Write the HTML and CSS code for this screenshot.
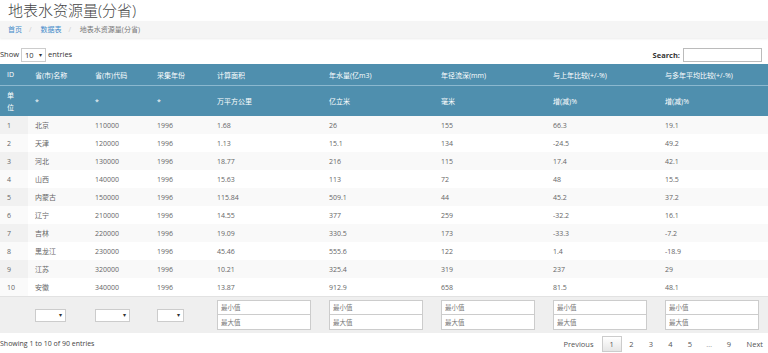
FILE: index.html
```html
<!DOCTYPE html>
<html lang="zh-CN">
<head>
    <meta charset="UTF-8">
    <title>地表水资源量(分省)</title>
    <link rel="stylesheet" href="styles.css">
</head>
<body>
    <h1 class="page-title">地表水资源量(分省)</h1>
    <div class="breadcrumb">
        <a href="#">首页</a><span class="sep">/</span>
        <a href="#">数据表</a><span class="sep">/</span>
        <span class="current">地表水资源量(分省)</span>
    </div>

    <div class="dt-top">
        <div class="dt-length">
            Show <span class="fake-select len">10<i>▾</i></span> entries
        </div>
        <div class="dt-search">
            <b>Search:</b> <input type="text" class="search-input">
        </div>
    </div>

    <table class="data-table">
        <colgroup>
            <col style="width:28px">
            <col style="width:60px">
            <col style="width:62px">
            <col style="width:60px">
            <col style="width:112px">
            <col style="width:112px">
            <col style="width:112px">
            <col style="width:112px">
            <col>
        </colgroup>
        <thead>
            <tr class="head-main">
                <th>ID</th>
                <th>省(市)名称</th>
                <th>省(市)代码</th>
                <th>采集年份</th>
                <th>计算面积</th>
                <th>年水量(亿m3)</th>
                <th>年径流深(mm)</th>
                <th>与上年比较(+/-%)</th>
                <th>与多年平均比较(+/-%)</th>
            </tr>
            <tr class="head-unit">
                <th class="unit-cell">单位</th>
                <th>*</th>
                <th>*</th>
                <th>*</th>
                <th>万平方公里</th>
                <th>亿立米</th>
                <th>毫米</th>
                <th>增(减)%</th>
                <th>增(减)%</th>
            </tr>
        </thead>
        <tbody>
            <tr><td>1</td><td>北京</td><td>110000</td><td>1996</td><td>1.68</td><td>26</td><td>155</td><td>66.3</td><td>19.1</td></tr>
            <tr><td>2</td><td>天津</td><td>120000</td><td>1996</td><td>1.13</td><td>15.1</td><td>134</td><td>-24.5</td><td>49.2</td></tr>
            <tr><td>3</td><td>河北</td><td>130000</td><td>1996</td><td>18.77</td><td>216</td><td>115</td><td>17.4</td><td>42.1</td></tr>
            <tr><td>4</td><td>山西</td><td>140000</td><td>1996</td><td>15.63</td><td>113</td><td>72</td><td>48</td><td>15.5</td></tr>
            <tr><td>5</td><td>内蒙古</td><td>150000</td><td>1996</td><td>115.84</td><td>509.1</td><td>44</td><td>45.2</td><td>37.2</td></tr>
            <tr><td>6</td><td>辽宁</td><td>210000</td><td>1996</td><td>14.55</td><td>377</td><td>259</td><td>-32.2</td><td>16.1</td></tr>
            <tr><td>7</td><td>吉林</td><td>220000</td><td>1996</td><td>19.09</td><td>330.5</td><td>173</td><td>-33.3</td><td>-7.2</td></tr>
            <tr><td>8</td><td>黑龙江</td><td>230000</td><td>1996</td><td>45.46</td><td>555.6</td><td>122</td><td>1.4</td><td>-18.9</td></tr>
            <tr><td>9</td><td>江苏</td><td>320000</td><td>1996</td><td>10.21</td><td>325.4</td><td>319</td><td>237</td><td>29</td></tr>
            <tr><td>10</td><td>安徽</td><td>340000</td><td>1996</td><td>13.87</td><td>912.9</td><td>658</td><td>81.5</td><td>48.1</td></tr>
        </tbody>
        <tfoot>
            <tr class="filter-row">
                <td></td>
                <td><span class="fake-select w31"><i>▾</i></span></td>
                <td><span class="fake-select w35"><i>▾</i></span></td>
                <td><span class="fake-select w27"><i>▾</i></span></td>
                <td><div class="range"><input type="text" placeholder="最小值"><input type="text" placeholder="最大值"></div></td>
                <td><div class="range"><input type="text" placeholder="最小值"><input type="text" placeholder="最大值"></div></td>
                <td><div class="range"><input type="text" placeholder="最小值"><input type="text" placeholder="最大值"></div></td>
                <td><div class="range"><input type="text" placeholder="最小值"><input type="text" placeholder="最大值"></div></td>
                <td><div class="range"><input type="text" placeholder="最小值"><input type="text" placeholder="最大值"></div></td>
            </tr>
        </tfoot>
    </table>

    <div class="dt-bottom">
        <div class="dt-info">Showing 1 to 10 of 90 entries</div>
        <div class="pager">
            <a href="#" class="pg prev">Previous</a>
            <a href="#" class="pg current">1</a>
            <a href="#" class="pg">2</a>
            <a href="#" class="pg">3</a>
            <a href="#" class="pg">4</a>
            <a href="#" class="pg">5</a>
            <span class="pg ellipsis">…</span>
            <a href="#" class="pg">9</a>
            <a href="#" class="pg next">Next</a>
        </div>
    </div>
</body>
</html>
```

FILE: styles.css
```css
body {
    margin: 0;
    background: #fff;
    font-family: "Open Sans", "Noto Sans CJK SC", sans-serif;
    font-size: 7px;
    color: #555;
}
.page-title {
    margin: 0;
    height: 21px;
    line-height: 21px;
    padding-left: 8px;
    font-size: 15px;
    font-weight: 300;
    color: #444;
}
.breadcrumb {
    height: 17px;
    line-height: 18px;
    padding: 0 8px;
    background: #f5f5f5;
    box-shadow: 0 1px 2px rgba(0,0,0,0.08);
    color: #777;
}
.breadcrumb a {
    color: #428bca;
    text-decoration: none;
}
.breadcrumb .sep {
    color: #ccc;
    margin: 0 7px;
}
.dt-top {
    display: flex;
    justify-content: space-between;
    align-items: center;
    height: 17px;
    margin: 8px 0 1px;
}
.dt-length {
    font-size: 7.5px;
    color: #333;
}
.fake-select {
    display: inline-flex;
    align-items: center;
    justify-content: space-between;
    box-sizing: border-box;
    height: 13px;
    border: 1px solid #ccc;
    background: #fff;
    padding: 0 3px;
    font-size: 7.5px;
    color: #333;
    vertical-align: middle;
}
.fake-select i {
    font-style: normal;
    font-size: 6px;
    margin-left: auto;
}
.fake-select.len {
    width: 25px;
    height: 14px;
}
.w31 { width: 31px; }
.w35 { width: 35px; }
.w27 { width: 27px; }
.dt-search {
    display: flex;
    align-items: center;
    gap: 3px;
    padding-right: 6px;
    color: #333;
    font-size: 7.5px;
}
.search-input {
    width: 79px;
    height: 14px;
    box-sizing: border-box;
    border: 1px solid #bbb;
    padding: 0 2px;
}
.data-table {
    width: 100%;
    border-collapse: collapse;
    table-layout: fixed;
}
.data-table th,
.data-table td {
    padding: 0 7px;
    text-align: left;
    vertical-align: middle;
    white-space: nowrap;
}
.data-table thead th {
    background: #4f8fae;
    color: #fff;
    font-weight: normal;
}
.head-main th {
    height: 21px;
    border-bottom: 1px solid #8bb8cf;
}
.head-unit th {
    height: 29px;
}
.head-unit th.unit-cell {
    white-space: normal;
    line-height: 12px;
    padding-right: 9px;
    padding-top: 1px;
}
.data-table tbody td {
    height: 18px;
    color: #666;
}
.data-table tbody tr:nth-child(odd) td {
    background: #f9f9f9;
}
.data-table tbody tr:nth-child(odd) td:first-child {
    background: #f1f1f1;
}
.data-table tbody tr:nth-child(even) td:first-child {
    background: #fafafa;
}
.filter-row td {
    height: 36px;
    background: #efefef;
    border-top: 1px solid #e2e2e2;
}
.range {
    display: flex;
    flex-direction: column;
    width: 94px;
}
.range input {
    box-sizing: border-box;
    height: 15px;
    width: 100%;
    border: 1px solid #ccc;
    padding: 0 3px;
    font-family: inherit;
    font-size: 6.5px;
    margin: 0;
}
.range input + input {
    border-top: 0;
}
.range input::placeholder {
    color: #777;
}
.dt-bottom {
    display: flex;
    justify-content: space-between;
    align-items: center;
    height: 21px;
}
.dt-info {
    color: #444;
    font-size: 7px;
}
.pager {
    display: flex;
    align-items: center;
    padding-right: 5px;
}
.pg {
    display: inline-block;
    box-sizing: border-box;
    width: 19.5px;
    height: 16px;
    line-height: 16px;
    text-align: center;
    color: #555;
    text-decoration: none;
    font-size: 7.5px;
}
.pg.prev {
    width: auto;
    margin-right: 8px;
}
.pg.next {
    width: auto;
    padding-left: 8px;
}
.pg.current {
    width: 20px;
    border: 1px solid #ccc;
    background: linear-gradient(#fff, #e6e6e6);
    line-height: 14px;
}
.pg.ellipsis { color: #999; }
```
